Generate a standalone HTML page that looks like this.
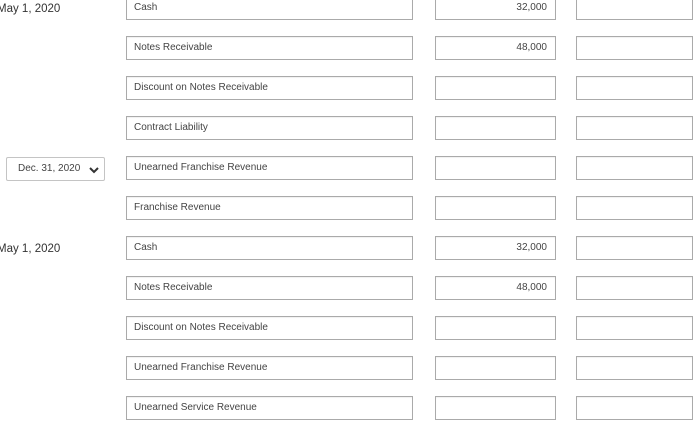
<!DOCTYPE html>
<html><head><style>
body{margin:0;width:700px;height:427px;overflow:hidden;background:#fff;font-family:"Liberation Sans",sans-serif;position:relative;color:#333}
.b{position:absolute;height:24px;border:1px solid #aaa;box-sizing:border-box;background:#fff;font-size:10px;line-height:22px;color:#444;box-shadow:inset 0 1px 1px rgba(0,0,0,.06)}
.a{left:126px;width:287px;padding-left:7px}
.d{left:435px;width:121px;text-align:right;padding-right:8px}
.c{left:576px;width:117px}
.dt{position:absolute;left:-3px;font-size:11.5px;color:#333}
.sel{position:absolute;left:6px;top:157px;width:99px;height:24px;border:1px solid #c4c4c4;box-sizing:border-box;border-radius:2px;font-size:10px;line-height:22px;padding-left:11px;color:#444}
</style></head><body>
<div class="dt" style="top:3px">May 1, 2020</div>
<div class="dt" style="top:243px">May 1, 2020</div>
<div class="sel">Dec. 31, 2020<svg style="position:absolute;right:5px;top:8px" width="10" height="8" viewBox="0 0 10 8"><path d="M1 2 L5 6 L9 2" stroke="#333" stroke-width="2" fill="none"/></svg></div>

<div class="b a" style="top:-4px">Cash</div><div class="b d" style="top:-4px">32,000</div><div class="b c" style="top:-4px"></div>
<div class="b a" style="top:36px">Notes Receivable</div><div class="b d" style="top:36px">48,000</div><div class="b c" style="top:36px"></div>
<div class="b a" style="top:76px">Discount on Notes Receivable</div><div class="b d" style="top:76px"></div><div class="b c" style="top:76px"></div>
<div class="b a" style="top:116px">Contract Liability</div><div class="b d" style="top:116px"></div><div class="b c" style="top:116px"></div>
<div class="b a" style="top:156px">Unearned Franchise Revenue</div><div class="b d" style="top:156px"></div><div class="b c" style="top:156px"></div>
<div class="b a" style="top:196px">Franchise Revenue</div><div class="b d" style="top:196px"></div><div class="b c" style="top:196px"></div>
<div class="b a" style="top:236px">Cash</div><div class="b d" style="top:236px">32,000</div><div class="b c" style="top:236px"></div>
<div class="b a" style="top:276px">Notes Receivable</div><div class="b d" style="top:276px">48,000</div><div class="b c" style="top:276px"></div>
<div class="b a" style="top:316px">Discount on Notes Receivable</div><div class="b d" style="top:316px"></div><div class="b c" style="top:316px"></div>
<div class="b a" style="top:356px">Unearned Franchise Revenue</div><div class="b d" style="top:356px"></div><div class="b c" style="top:356px"></div>
<div class="b a" style="top:396px">Unearned Service Revenue</div><div class="b d" style="top:396px"></div><div class="b c" style="top:396px"></div>
</body></html>
